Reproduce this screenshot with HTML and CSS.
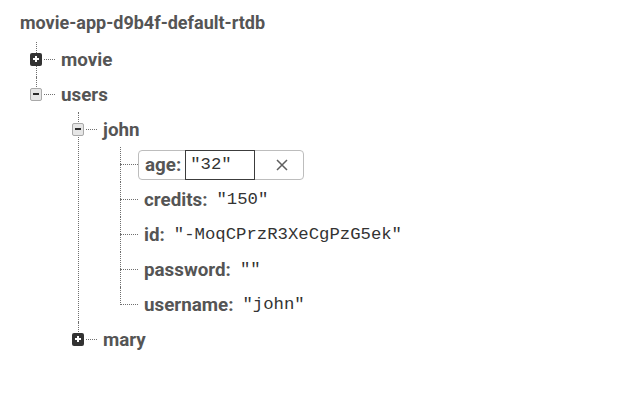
FILE: index.html
```html
<!DOCTYPE html>
<html>
<head>
<meta charset="utf-8">
<link rel="stylesheet" href="styles.css">
</head>
<body>
<div class="db">
  <div class="root">movie-app-d9b4f-default-rtdb</div>
  <ul class="tree lvl0">
    <li class="node">
      <div class="row"><span class="tog plus"></span><span class="dash"></span><span class="key">movie</span></div>
    </li>
    <li class="node last">
      <div class="row"><span class="tog minus"></span><span class="dash"></span><span class="key">users</span></div>
      <ul class="tree">
        <li class="node">
          <div class="row"><span class="tog minus"></span><span class="dash"></span><span class="key">john</span></div>
          <ul class="tree">
            <li class="node leaf">
              <div class="row"><span class="ldash"></span>
                <div class="edit"><span class="key">age:</span><input class="field" type="text" value="&quot;32&quot;"><span class="clear"><svg width="12" height="12" viewBox="0 0 12 12"><path d="M1 1L11 11M11 1L1 11" stroke="#5f5f5f" stroke-width="1.5" fill="none"/></svg></span></div>
              </div>
            </li>
            <li class="node leaf">
              <div class="row"><span class="ldash"></span><span class="key lk">credits:</span><span class="val">"150"</span></div>
            </li>
            <li class="node leaf">
              <div class="row"><span class="ldash"></span><span class="key lk">id:</span><span class="val">"-MoqCPrzR3XeCgPzG5ek"</span></div>
            </li>
            <li class="node leaf">
              <div class="row"><span class="ldash"></span><span class="key lk">password:</span><span class="val">""</span></div>
            </li>
            <li class="node leaf last">
              <div class="row"><span class="ldash"></span><span class="key lk">username:</span><span class="val">"john"</span></div>
            </li>
          </ul>
        </li>
        <li class="node last">
          <div class="row"><span class="tog plus"></span><span class="dash"></span><span class="key">mary</span></div>
        </li>
      </ul>
    </li>
  </ul>
</div>
</body>
</html>
```
FILE: styles.css
```css
html, body {
  margin: 0;
  padding: 0;
  background: #ffffff;
}
body {
  font-family: Roboto, "Liberation Sans", sans-serif;
  color: #555555;
}
.root {
  padding: 12px 0 8px 20px;
  line-height: 22px;
  font-size: 18px;
  font-weight: 700;
  color: #555555;
}
.tree {
  list-style: none;
  margin: 0;
  padding: 0 0 0 42px;
}
.tree.lvl0 {
  padding-left: 30px;
}
.node {
  position: relative;
}
.node::before {
  content: "";
  position: absolute;
  left: 6px;
  top: 0;
  bottom: 0;
  border-left: 1px dotted #6f6f6f;
}
.node.last::before {
  bottom: auto;
  height: 18px;
}
.row {
  height: 35px;
  display: flex;
  align-items: center;
}
.tog {
  position: relative;
  box-sizing: border-box;
  width: 12px;
  height: 13px;
  border-radius: 2px;
  flex: none;
}
.tog::after {
  content: "";
  position: absolute;
  left: 3px;
  top: 5px;
  width: 6px;
  height: 2px;
  background: #2b2b2b;
}
.tog.plus {
  background: #333333;
}
.tog.plus::after {
  background: #ffffff;
}
.tog.plus::before {
  content: "";
  position: absolute;
  left: 5px;
  top: 3px;
  width: 2px;
  height: 6px;
  background: #ffffff;
}
.tog.minus {
  background: #e6e6e6;
  border: 1px solid #a9a9a9;
}
.tog.minus::after {
  left: 2px;
  top: 4px;
}
.dash {
  width: 11px;
  margin-left: 2px;
  border-top: 1px dotted #6f6f6f;
  flex: none;
}
.ldash {
  width: 18px;
  margin-left: 6px;
  border-top: 1px dotted #6f6f6f;
  flex: none;
}
.key {
  margin-left: 6px;
  font-size: 18.8px;
  font-weight: 700;
  color: #555555;
  white-space: nowrap;
}
.key.lk {
  margin-left: 6px;
}
.val {
  margin-left: 9px;
  font-family: "Liberation Mono", "DejaVu Sans Mono", monospace;
  font-size: 17.3px;
  color: #333333;
  white-space: nowrap;
}
.edit {
  box-sizing: border-box;
  width: 166px;
  height: 30px;
  display: flex;
  align-items: stretch;
  border: 1px solid #bdbdbd;
  border-radius: 4px;
}
.edit .key {
  margin: 0;
  padding: 0 4px 0 6px;
  display: flex;
  align-items: center;
}
.field {
  box-sizing: border-box;
  width: 70px;
  height: 30px;
  margin: -1px 0;
  padding: 0 0 0 4px;
  border: 1px solid #3c3c3c;
  outline: none;
  font-family: "Liberation Mono", "DejaVu Sans Mono", monospace;
  font-size: 17.3px;
  color: #333333;
  background: #ffffff;
}
.clear {
  flex: 1;
  display: flex;
  align-items: center;
  justify-content: center;
  padding-left: 6px;
}
```
